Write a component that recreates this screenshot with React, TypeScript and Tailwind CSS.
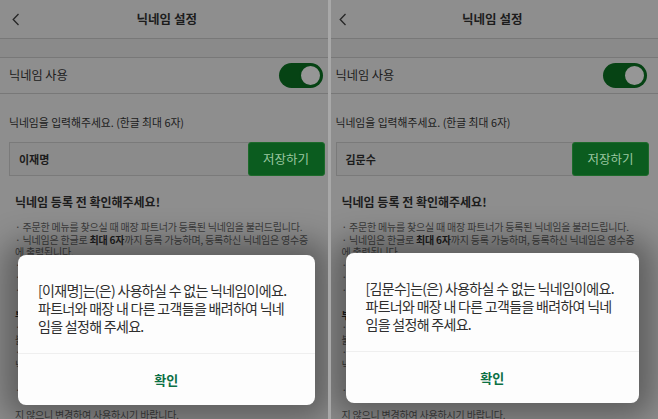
import { FC, ReactNode } from "react";

interface PanelProps {
  name: string;
  pad: string;
  dialogPos: string;
}

const Chevron = () => (
  <svg width="8" height="13" viewBox="0 0 8 13" fill="none">
    <path d="M6.5 1L1.2 6.5L6.5 12" stroke="#262626" strokeWidth="1.3" />
  </svg>
);

const Toggle = () => (
  <div className="flex h-[25px] w-[44px] items-center justify-end rounded-full bg-[#064314] p-[1px]">
    <div className="h-[23px] w-[23px] rounded-full border-2 border-[#064314] bg-[#969696]" />
  </div>
);

const Line: FC<{ children: ReactNode }> = ({ children }) => (
  <p className="whitespace-nowrap">{children}</p>
);

const Panel: FC<PanelProps> = ({ name, pad, dialogPos }) => {
  return (
    <div className="relative h-[419px] flex-1 overflow-hidden bg-[#8e8e8e] font-['Noto_Sans_CJK_KR',sans-serif] text-[#1c1c1c]">
      {/* header */}
      <div className="border-b border-[#787878]">
        <div className={`grid h-[38px] grid-cols-[40px_1fr_40px] items-center ${pad}`}>
          <div className="pl-[3px]">
            <Chevron />
          </div>
          <h1 className="text-center text-[12.5px] font-bold">닉네임 설정</h1>
          <div />
        </div>
      </div>
      <div className="h-[19px] border-b border-[#787878] bg-[#8a8a8a]" />
      <div className="border-b border-[#787878]">
        <div className={`flex h-[35px] items-center justify-between ${pad}`}>
          <span className="text-[12.2px]">닉네임 사용</span>
          <div className="mr-[2px]">
            <Toggle />
          </div>
        </div>
      </div>

      <div className={pad}>
        <p className="mt-[21px] text-[10.8px] leading-[14px]">
          닉네임을 입력해주세요. (한글 최대 6자)
        </p>
        <div className="mt-[13px] flex h-[34px]">
          <div className="flex flex-1 items-center border border-[#7a7a7a] bg-[#8b8b8b] pl-[9px] text-[11px] font-bold">
            {name}
          </div>
          <button className="-ml-[2px] w-[77px] rounded-[3px] border border-[#1d6a2b] bg-[#0b5c1f] text-[12.5px] text-[#9cc8a1]">
            저장하기
          </button>
        </div>

        <div className="pl-[6px]">
          <h2 className="mt-[19px] text-[12px] font-bold leading-[14px]">
            닉네임 등록 전 확인해주세요!
          </h2>
          <div className="mt-[12px] text-[10px] leading-[12.5px] tracking-[-0.02em] text-[#3c3c3c]">
            <Line>· 주문한 메뉴를 찾으실 때 매장 파트너가 등록된 닉네임을 불러드립니다.</Line>
            <Line>
              · 닉네임은 한글로 <b className="text-[#1c1c1c]">최대 6자</b>까지 등록 가능하며, 등록하신 닉네임은 영수증
            </Line>
            <Line>에 출력됩니다.</Line>
            <Line>· 닉네임 사용 여부는 설정 메뉴에서 언제든지 변경하실 수 있습니다.</Line>
            <Line>· 사이렌 오더로 주문하신 경우에만 닉네임으로 불러드립니다.</Line>
            <Line>· 매장 상황에 따라 닉네임 대신 주문번호로 불러드릴 수 있습니다.</Line>
            <Line>&nbsp;</Line>
            <Line>
              <b className="text-[#1c1c1c]">부적절한 닉네임 안내</b>
            </Line>
            <Line>· 욕설, 비속어, 특정인 또는 단체를 비방하는 닉네임이나 타인에게</Line>
            <Line>불쾌감을 줄 수 있는 닉네임은 등록이 제한될 수 있습니다.</Line>
            <Line>· 정치적 표현, 특정 인물의 이름 등 매장 파트너가 부르기 어려운</Line>
            <Line>닉네임은 사용하실 수 없습니다.</Line>
            <Line>&nbsp;</Line>
            <Line>· 등록이 제한된 단어는 닉네임 설정 화면에서 별도로 안내해 드리며,</Line>
            <Line>&nbsp;</Line>
            <Line>지 않으니 변경하여 사용하시기 바랍니다.</Line>
            <Line>
              · 부적절한 닉네임을 <b className="text-[#1c1c1c]">3개월간 3회 이상 등록</b>하는 경우, 이후 30일간 닉네임
            </Line>
          </div>
        </div>
      </div>

      {/* dialog */}
      <div
        className={`absolute flex h-[150px] flex-col rounded-[8px] bg-[#fdfdfd] shadow-[0_0_30px_14px_rgba(0,0,0,0.34)] ${dialogPos}`}
      >
        <div className="flex-1 px-[20px] pt-[26px] text-[14px] leading-[18px] tracking-[-0.05em] text-[#2e2e2e]">
          <Line>[{name}]는(은) 사용하실 수 없는 닉네임이에요.</Line>
          <Line>파트너와 매장 내 다른 고객들을 배려하여 닉네</Line>
          <Line>임을 설정해 주세요.</Line>
        </div>
        <div className="flex h-[52px] items-center justify-center border-t border-[#efefef]">
          <button className="text-[13px] font-bold text-[#0b7044]">확인</button>
        </div>
      </div>
    </div>
  );
};

export default function App() {
  return (
    <div className="flex h-[419px] w-[658px] gap-[3px] bg-[#a8a8a8]">
      <Panel name="이재명" pad="pl-[9px] pr-[3px]" dialogPos="left-[18px] right-[13px] top-[255px]" />
      <Panel name="김문수" pad="pl-[5px] pr-[9px]" dialogPos="left-[15px] right-[19px] top-[253px]" />
    </div>
  );
}
